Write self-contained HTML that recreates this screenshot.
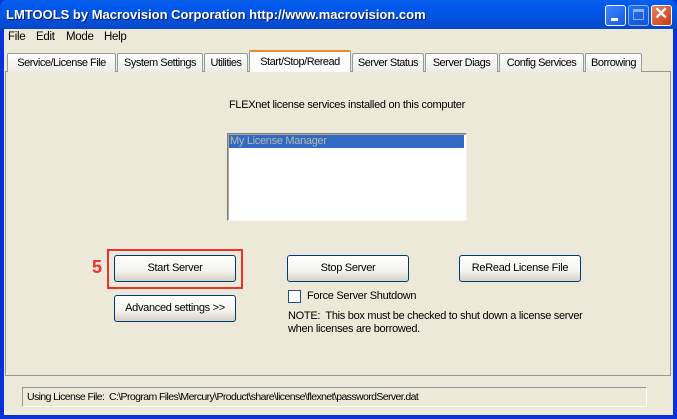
<!DOCTYPE html>
<html><head><style>
*{margin:0;padding:0;box-sizing:border-box}
body{width:677px;height:419px;overflow:hidden;background:#0831d9;font-family:Tahoma,"Liberation Sans",sans-serif;font-size:11px;letter-spacing:-0.3px;color:#000;position:relative}
.a{position:absolute}
#win{left:4px;top:29px;width:669px;height:386px;background:#ece9d8}
#title{left:0;top:0;width:677px;height:29px;background:linear-gradient(#0a5fe8,#0058ee 20%,#0453e0 60%,#0646c8);border-radius:7px 7px 0 0}
#title span{position:absolute;left:6px;top:7px;color:#fff;font-weight:bold;font-size:13px;letter-spacing:0;text-shadow:1px 1px #0a1e6a}
.cb{top:5px;width:21px;height:21px;border:1px solid #fff;border-radius:3px;background:linear-gradient(135deg,#3c86ff,#1c57e0)}
.tab{top:53px;height:19px;border:1px solid #919b9c;border-bottom:none;background:linear-gradient(#fff,#ecebe5);padding:3px 0 0;text-align:center;white-space:nowrap;border-radius:2px 2px 0 0;font-size:11px;letter-spacing:-0.5px}
.btn{height:27px;border:1px solid #003c74;border-radius:3px;background:linear-gradient(#fff,#f4f3ee 60%,#d6d0c5);text-align:center;line-height:25px;font-size:11px}
.m{top:31px;font-size:11.5px}
</style></head><body>
<div id="title" class="a"><span>LMTOOLS by Macrovision Corporation http://www.macrovision.com</span>
<div class="a cb" style="left:605px"><div class="a" style="left:5px;top:12px;width:7px;height:3px;background:#fff"></div></div>
<div class="a cb" style="left:628px;opacity:.55"><div class="a" style="left:4px;top:3px;width:11px;height:11px;border:1px solid #fff;border-top-width:3px"></div></div>
<div class="a cb" style="left:651px;background:linear-gradient(135deg,#e88060,#c83a10)"><div class="a" style="left:2px;top:-2px;color:#fff;font-size:17px;font-weight:bold">✕</div></div>
</div>
<div id="win" class="a"></div>
<div class="a m" style="left:8px">File</div>
<div class="a m" style="left:36px">Edit</div>
<div class="a m" style="left:66px">Mode</div>
<div class="a m" style="left:104px">Help</div>
<div class="a" style="left:5px;top:71px;width:666px;height:305px;border:1px solid #919b9c;background:#ece9d8"></div>
<div class="a tab" style="left:7px;width:109px">Service/License File</div>
<div class="a tab" style="left:117px;width:86px">System Settings</div>
<div class="a tab" style="left:204px;width:44px">Utilities</div>
<div class="a tab" style="left:249px;top:50px;height:22px;width:102px;background:#fcfcfe;border-top:2px solid #e68b2c;z-index:2;padding-top:4px">Start/Stop/Reread</div>
<div class="a tab" style="left:352px;width:72px">Server Status</div>
<div class="a tab" style="left:425px;width:73px">Server Diags</div>
<div class="a tab" style="left:499px;width:85px">Config Services</div>
<div class="a tab" style="left:585px;width:57px">Borrowing</div>
<div class="a" style="left:229px;top:99px">FLEXnet license services installed on this computer</div>
<div class="a" style="left:227px;top:133px;width:240px;height:88px;background:#fff;border:1px solid;border-color:#7f7f7f #f4f3ee #f4f3ee #7f7f7f;box-shadow:inset 1px 1px #aca899"></div>
<div class="a" style="left:229px;top:135px;width:235px;height:13px;background:#316ac5;color:#b8b8a8;padding-left:1px;line-height:13px">My License Manager</div>
<div class="a" style="left:107px;top:249px;width:136px;height:40px;border:2px solid #f0302a"></div>
<div class="a" style="left:92px;top:257px;color:#f0302a;font:bold 18px 'Liberation Sans',sans-serif">5</div>
<div class="a btn" style="left:114px;top:255px;width:122px">Start Server</div>
<div class="a btn" style="left:287px;top:255px;width:122px">Stop Server</div>
<div class="a btn" style="left:459px;top:255px;width:122px">ReRead License File</div>
<div class="a btn" style="left:114px;top:295px;width:122px">Advanced settings &gt;&gt;</div>
<div class="a" style="left:288px;top:290px;width:13px;height:13px;border:1px solid #1c5180;background:#fff"></div>
<div class="a" style="left:307px;top:290px">Force Server Shutdown</div>
<div class="a" style="left:288px;top:310px;line-height:13px">NOTE:&nbsp; This box must be checked to shut down a license server<br>when licenses are borrowed.</div>
<div class="a" style="left:22px;top:387px;width:625px;height:20px;border:1px solid;border-color:#919b9c #fff #fff #919b9c;padding:3px 4px;font-size:10.5px;letter-spacing:-0.6px;white-space:nowrap">Using License File:&nbsp; C:\Program Files\Mercury\Product\share\license\flexnet\passwordServer.dat</div>
</body></html>
